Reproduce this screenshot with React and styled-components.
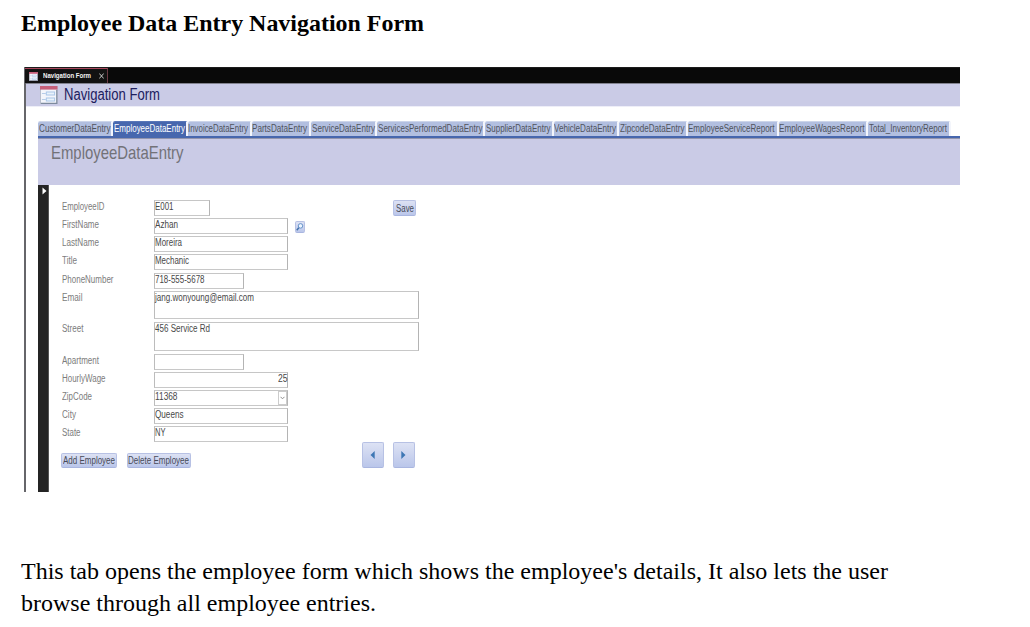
import React, { useLayoutEffect, useRef, useState } from "react";
import styled, { createGlobalStyle } from "styled-components";

const GlobalStyle = createGlobalStyle`
  * { box-sizing: border-box; }
  body { margin: 0; background: #fff; overflow: hidden; }
`;

const Page = styled.main`
  width: 1030px;
  height: 627px;
  padding: 8px 21px 0;
  font-family: "Liberation Serif", "Times New Roman", serif;
  color: #000;
`;

const Title = styled.h1`
  margin: 0;
  height: 59px;
  font-size: 24px;
  line-height: 31px;
  font-weight: 700;
`;

const Caption = styled.p`
  margin: 63px 0 0;
  font-size: 24px;
  line-height: 32px;
`;

const Line = styled.span`
  display: block;
  height: 32px;
`;

const FitBox = styled.span`
  display: block;
  flex: none;
  width: ${(p) => p.$w}px;
  white-space: nowrap;
`;

const FitInner = styled.span`
  display: inline-block;
  vertical-align: top;
  transform-origin: 0 0;
`;

/* Narrows its text horizontally so that it fills the given width. */
function Fit({ w, children }) {
  const ref = useRef(null);
  const [scale, setScale] = useState(1);
  useLayoutEffect(() => {
    const natural = parseFloat(getComputedStyle(ref.current).width);
    if (natural) setScale(w / natural);
  }, [w, children]);
  return (
    <FitBox $w={w}>
      <FitInner ref={ref} style={{ transform: `scaleX(${scale})` }}>
        {children}
      </FitInner>
    </FitBox>
  );
}

const Window = styled.section`
  margin-left: 3px;
  width: 936px;
  height: 425px;
  border-left: 2px solid #66666a;
  background: #fff;
  font-family: "Liberation Sans", Arial, sans-serif;
`;

const TitleBar = styled.div`
  height: 16px;
  margin-left: -1px;
  background: #090909;
  border-top: 1px solid #1c1c1c;
`;

const DocumentTab = styled.div`
  display: flex;
  align-items: center;
  width: 83px;
  height: 15px;
  padding-left: 4px;
  border-top: 1px solid #a8475c;
  border-right: 1px solid #6a3a44;
  background: #121212;
  color: #f4f4f4;
  font-size: 7.8px;
  font-weight: 700;
  line-height: 12px;
`;

const TabName = styled.div`
  margin: 0 0 0 4.5px;
`;

const CloseIcon = styled.svg`
  margin: 0 0 0 8px;
`;

const Header = styled.header`
  display: flex;
  height: 24px;
  padding: 2px 0 0 14px;
  background: #cacbe6;
  border-top: 1px solid #82838f;
  border-bottom: 1px solid #eeeef8;
  color: #20205e;
  font-size: 15.8px;
  line-height: 18px;
`;

const HeaderName = styled.div`
  margin: 0 0 0 6px;
`;

const Tabs = styled.nav`
  display: flex;
  height: 29px;
  padding: 14px 0 0 12px;
`;

const Tab = styled.div`
  flex: none;
  width: ${(p) => p.$w}px;
  height: 15px;
  padding-left: ${(p) => (p.$active ? 1 : 0.5)}px;
  border-right: 2px solid #f3f5fb;
  border-top: 1px solid ${(p) => (p.$active ? "#5876b8" : "#ccd5ea")};
  border-radius: 2px 2px 0 0;
  background: ${(p) => (p.$active ? "#4767ae" : "#b2bfe0")};
  background-clip: padding-box;
  color: ${(p) => (p.$active ? "#fff" : "#50535c")};
  font-size: 10px;
  line-height: 14px;
`;

const FormHeader = styled.div`
  height: 49px;
  margin-left: 12px;
  padding: 4px 0 0 12.5px;
  border-top: 2px solid #4767ae;
  background: #cacbe6;
  box-shadow: inset 0 1px #9295ae;
  color: #727278;
  font-size: 17.8px;
  line-height: 22px;
`;

const FormArea = styled.div`
  display: flex;
  height: 307px;
  margin-left: 12px;
`;

const RecordSelector = styled.div`
  width: 11px;
  padding: 2px 0 0 4px;
  border-right: 1px solid #555;
  background: #242424;
  line-height: 0;
`;

const Fields = styled.div`
  width: 370px;
  padding: 15px 0 0 12px;
  font-size: 10px;
`;

const Row = styled.div`
  display: flex;
  height: ${(p) => (p.$tall ? 31.5 : 18.14)}px;
`;

const Label = styled.div`
  width: 93px;
  padding-left: 0.5px;
  color: #7c7c7c;
  line-height: 14px;
`;

const Field = styled.div`
  display: flex;
  justify-content: ${(p) => (p.$right ? "flex-end" : "flex-start")};
  width: ${(p) => p.$w}px;
  height: ${(p) => (p.$tall ? 28.5 : 16)}px;
  border: 1px solid;
  border-color: #c6c6c6 #b4b4b4 #c8c8c8 #bcbcbc;
  color: #484848;
  line-height: 12px;
`;

const DropButton = styled.div`
  display: grid;
  place-items: center;
  width: 9px;
  height: 14px;
  margin-left: auto;
  border: 1px solid #ccc;
`;

const Button = styled.div`
  flex: none;
  display: flex;
  justify-content: center;
  align-items: center;
  width: ${(p) => p.$w}px;
  height: ${(p) => p.$h}px;
  border: 1px solid #b7c1e4;
  border-bottom-color: #a9b6e0;
  border-radius: 2px;
  background: linear-gradient(#dde2f4, #bac6ea);
  color: #484b58;
  line-height: 13px;
`;

const SaveSlot = styled.div`
  margin: 0.4px 3px 0 auto;
`;

const SearchSlot = styled.div`
  margin: 3px 0 0 7px;
`;

const Actions = styled.div`
  display: flex;
  align-items: flex-start;
  gap: 11px;
  padding: 0 4.5px 0 0;
  margin: -2px 0 0;
`;

const TextActions = styled.div`
  display: flex;
  gap: 10px;
  margin-top: 11px;
`;

const Pager = styled.div`
  display: flex;
  gap: 9px;
  margin-left: auto;
`;

function FormIcon({ w, h }) {
  return (
    <svg width={w} height={h} viewBox="0 0 18 18" preserveAspectRatio="none">
      <rect x="0.5" y="0.5" width="17" height="17" fill="#f3f5fb" stroke="#b7bccb" />
      <rect width="18" height="3.6" fill="#c65f7a" />
      <path d="M1 17.3h16.3V4" fill="none" stroke="#7d8a9d" strokeWidth="1.2" />
      <path d="M2 7.5h4M2 13.5h4" stroke="#b5cbe8" />
      <rect x="6.5" y="6" width="8.5" height="3" fill="#e9f2fb" stroke="#a9c6e8" />
      <rect x="6.5" y="12" width="8.5" height="3" fill="#e9f2fb" stroke="#a9c6e8" />
    </svg>
  );
}

const tabs = [
  ["CustomerDataEntry", 74.5, 71.5],
  ["EmployeeDataEntry", 75, 71],
  ["InvoiceDataEntry", 64, 60],
  ["PartsDataEntry", 59.5, 55],
  ["ServiceDataEntry", 66, 63],
  ["ServicesPerformedDataEntry", 108, 104.5],
  ["SupplierDataEntry", 68.5, 64.5],
  ["VehicleDataEntry", 65.5, 62],
  ["ZipcodeDataEntry", 68.5, 64.5],
  ["EmployeeServiceReport", 91, 86.5],
  ["EmployeeWagesReport", 89.5, 85.5],
  ["Total_InventoryReport", 83, 78],
];

const fields = [
  { label: "EmployeeID", lw: 42.5, value: "E001", vw: 18.5, w: 56, save: true },
  { label: "FirstName", lw: 37, value: "Azhan", vw: 23, w: 134, search: true },
  { label: "LastName", lw: 37, value: "Moreira", vw: 27, w: 134 },
  { label: "Title", lw: 15, value: "Mechanic", vw: 34, w: 134 },
  { label: "PhoneNumber", lw: 51.5, value: "718-555-5678", vw: 49.5, w: 90 },
  { label: "Email", lw: 20.5, value: "jang.wonyoung@email.com", vw: 99, w: 265, tall: true },
  { label: "Street", lw: 21.5, value: "456 Service Rd", vw: 55, w: 265, tall: true },
  { label: "Apartment", lw: 37, w: 90 },
  { label: "HourlyWage", lw: 43.5, value: "25", vw: 9.5, w: 134, right: true },
  { label: "ZipCode", lw: 30, value: "11368", vw: 22.5, w: 134, drop: true },
  { label: "City", lw: 14, value: "Queens", vw: 28.5, w: 134 },
  { label: "State", lw: 18.5, value: "NY", vw: 10.5, w: 134 },
];

function FieldRow({ f }) {
  return (
    <Row $tall={f.tall}>
      <Label><Fit w={f.lw}>{f.label}</Fit></Label>
      <Field $w={f.w} $tall={f.tall} $right={f.right}>
        {f.value && <Fit w={f.vw}>{f.value}</Fit>}
        {f.drop && (
          <DropButton>
            <svg width="5" height="4" viewBox="0 0 5 4">
              <path d="M0.5 0.8L2.5 2.8L4.5 0.8" fill="none" stroke="#8c8c8c" />
            </svg>
          </DropButton>
        )}
      </Field>
      {f.search && (
        <SearchSlot>
          <Button $w={9.5} $h={12}>
            <svg width="8" height="10" viewBox="0 0 8 10">
              <circle cx="4.8" cy="3.8" r="2.4" fill="#edf5ff" stroke="#5d8dc5" />
              <path d="M3 5.8L0.8 8.4" stroke="#3f70aa" strokeWidth="1.5" />
            </svg>
          </Button>
        </SearchSlot>
      )}
      {f.save && (
        <SaveSlot>
          <Button $w={23} $h={15.5}><Fit w={18}>Save</Fit></Button>
        </SaveSlot>
      )}
    </Row>
  );
}

export default function App() {
  return (
    <Page>
      <GlobalStyle />
      <Title><Fit w={403}>Employee Data Entry Navigation Form</Fit></Title>
      <Window>
        <TitleBar>
          <DocumentTab>
            <FormIcon w={9} h={9} />
            <TabName><Fit w={48}>Navigation Form</Fit></TabName>
            <CloseIcon width="5" height="6" viewBox="0 0 5 6">
              <path d="M0.3 0.5L4.7 5.5M4.7 0.5L0.3 5.5" stroke="#ddd" strokeWidth="0.9" />
            </CloseIcon>
          </DocumentTab>
        </TitleBar>
        <Header>
          <FormIcon w={17.5} h={18} />
          <HeaderName><Fit w={96}>Navigation Form</Fit></HeaderName>
        </Header>
        <Tabs>
          {tabs.map(([name, width, textWidth], i) => (
            <Tab key={name} $w={width} $active={i === 1}>
              <Fit w={textWidth}>{name}</Fit>
            </Tab>
          ))}
        </Tabs>
        <FormHeader><Fit w={132.5}>EmployeeDataEntry</Fit></FormHeader>
        <FormArea>
          <RecordSelector>
            <svg width="5" height="8" viewBox="0 0 5 8">
              <path d="M0.5 0.5L4.5 4L0.5 7.5Z" fill="#fff" />
            </svg>
          </RecordSelector>
          <Fields>
            {fields.map((f) => <FieldRow key={f.label} f={f} />)}
            <Actions>
              <TextActions>
                <Button $w={55.5} $h={15}><Fit w={52}>Add Employee</Fit></Button>
                <Button $w={64} $h={15}><Fit w={61}>Delete Employee</Fit></Button>
              </TextActions>
              <Pager>
                <Button $w={22} $h={26}>
                  <svg width="5" height="8" viewBox="0 0 5 8">
                    <path d="M4.7 0L0.5 4L4.7 8Z" fill="#3e77b4" />
                  </svg>
                </Button>
                <Button $w={22} $h={26}>
                  <svg width="5" height="8" viewBox="0 0 5 8">
                    <path d="M0.3 0L4.5 4L0.3 8Z" fill="#3e77b4" />
                  </svg>
                </Button>
              </Pager>
            </Actions>
          </Fields>
        </FormArea>
      </Window>
      <Caption>
        <Line><Fit w={867}>This tab opens the employee form which shows the employee's details, It also lets the user</Fit></Line>
        <Line><Fit w={355}>browse through all employee entries.</Fit></Line>
      </Caption>
    </Page>
  );
}
